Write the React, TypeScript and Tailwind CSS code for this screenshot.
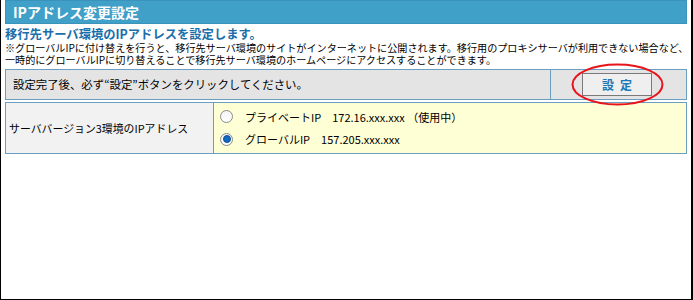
import React from "react";

const jp = { fontFamily: '"Noto Sans CJK JP", "DejaVu Sans", sans-serif' };

function Radio({ checked }: { checked?: boolean }) {
  return (
    <span className="w-[13px] h-[13px] rounded-full border border-[#8a8a8a] bg-gradient-to-b from-[#f4f4f4] to-white flex items-center justify-center shrink-0">
      {checked && <span className="w-[8px] h-[8px] rounded-full bg-[#1468c0] border border-[#0c4f98]" />}
    </span>
  );
}

export default function App() {
  return (
    <div
      className="w-[693px] h-[300px] bg-white border-l border-r-2 border-b border-black pl-[4px] pr-[4px] text-black"
      style={jp}
    >
      <div className="h-[24px] bg-[#40a0c8] border border-[#3a93ba] text-white font-bold text-[14px] leading-[22px] pl-[7px]">
        IPアドレス変更設定
      </div>
      <div className="text-[#1a6eaa] font-bold text-[12.3px] leading-[16px] mt-[2px]">
        移行先サーバ環境のIPアドレスを設定します。
      </div>
      <div className="text-[10.1px] leading-[12px] whitespace-nowrap">
        <div>※グローバルIPに付け替えを行うと、移行先サーバ環境のサイトがインターネットに公開されます。移行用のプロキシサーバが利用できない場合など、</div>
        <div>一時的にグローバルIPに切り替えることで移行先サーバ環境のホームページにアクセスすることができます。</div>
      </div>

      <div className="mt-[3px] flex h-[31px] border border-[#6b9fc2] bg-[#e4e4e4]">
        <div className="flex-1 flex items-center pl-[7px] text-[11.4px]">
          設定完了後、必ず“設定”ボタンをクリックしてください。
        </div>
        <div className="w-[136px] border-l border-[#6b9fc2] flex items-center pl-[31px] relative">
          <button className="w-[70px] h-[23px] bg-[#efefef] border border-[#7a7a7a] text-[#1b78b6] font-bold text-[12px] tracking-[6px] pl-[6px]">
            設定
          </button>
          <svg className="absolute left-[20px] top-[-7px]" width="93" height="43" viewBox="0 0 93 43">
            <ellipse cx="46.5" cy="21.5" rx="45" ry="20" fill="none" stroke="#e8141b" strokeWidth="2" />
          </svg>
        </div>
      </div>

      <div className="mt-[2px] flex h-[52px] border border-[#6b9fc2]">
        <div className="w-[207px] bg-[#f2f2f2] flex items-center pl-[3px] text-[10.9px]">
          サーババージョン3環境のIPアドレス
        </div>
        <div className="flex-1 border-l border-[#6b9fc2] bg-[#ffffd6] flex flex-col justify-center gap-[6px] pl-[6px] text-[11px]">
          <div className="flex items-center gap-[12px]">
            <Radio />
            <span>プライベートIP　172.16.xxx.xxx （使用中）</span>
          </div>
          <div className="flex items-center gap-[12px]">
            <Radio checked />
            <span>グローバルIP　157.205.xxx.xxx</span>
          </div>
        </div>
      </div>
    </div>
  );
}
